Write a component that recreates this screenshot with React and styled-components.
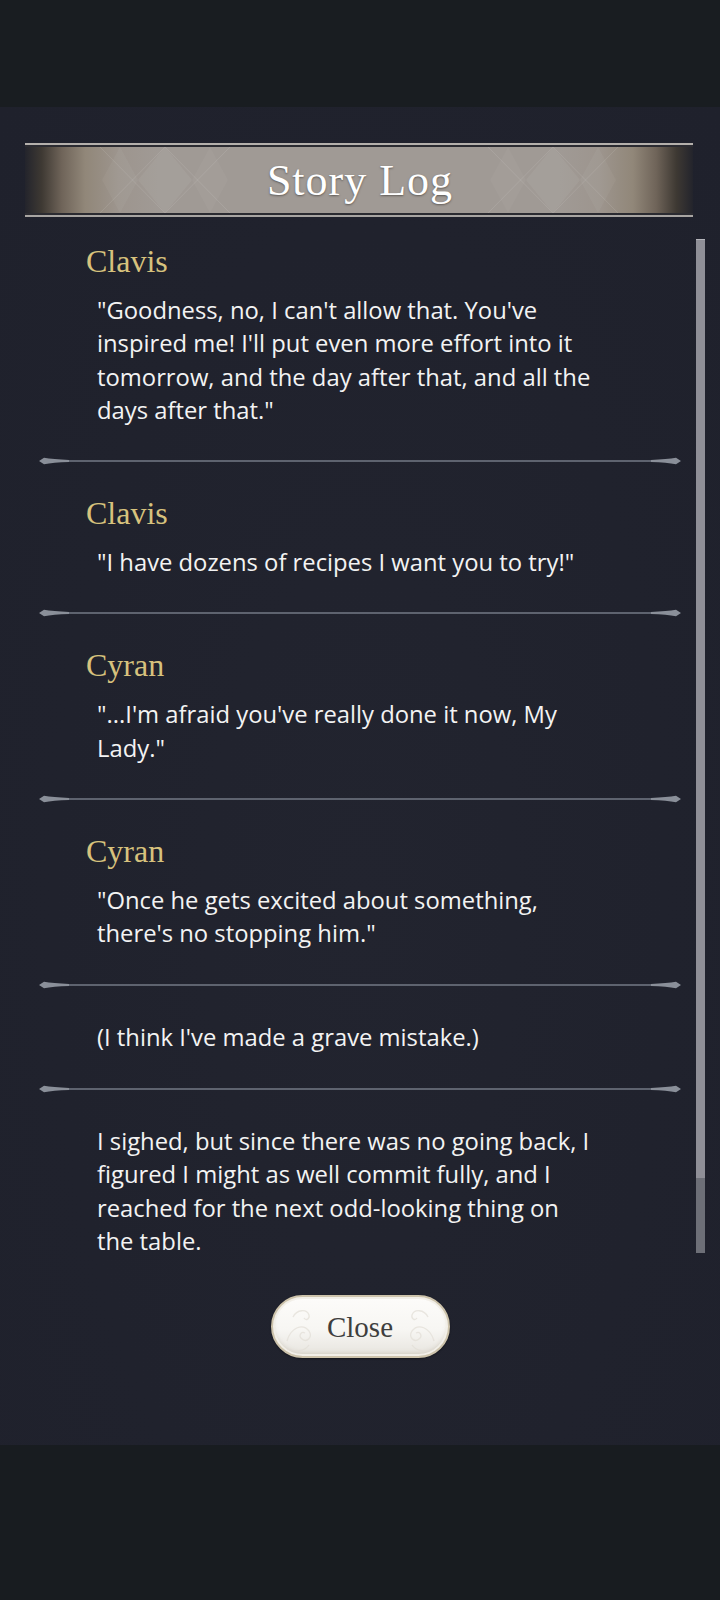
import React from "react"
import styled, { createGlobalStyle } from "styled-components"

const GlobalStyle = createGlobalStyle`
  html, body {
    margin: 0;
    padding: 0;
    background: #181c20;
  }
`

const entries = [
  {
    name: "Clavis",
    lines: [
      "\"Goodness, no, I can't allow that. You've",
      "inspired me! I'll put even more effort into it",
      "tomorrow, and the day after that, and all the",
      "days after that.\"",
    ],
  },
  { name: "Clavis", lines: ["\"I have dozens of recipes I want you to try!\""] },
  { name: "Cyran", lines: ["\"...I'm afraid you've really done it now, My", "Lady.\""] },
  { name: "Cyran", lines: ["\"Once he gets excited about something,", "there's no stopping him.\""] },
  { lines: ["(I think I've made a grave mistake.)"] },
  {
    lines: [
      "I sighed, but since there was no going back, I",
      "figured I might as well commit fully, and I",
      "reached for the next odd-looking thing on",
      "the table.",
    ],
  },
]

const Page = styled.div`
  width: 720px;
  height: 1600px;
  display: flex;
  flex-direction: column;
  background: #181c20;
  overflow: hidden;
`

const TopBar = styled.div`
  height: 107px;
  flex: none;
  background: #191d21;
`

const BottomBar = styled.div`
  flex: 1;
  background: #181c20;
`

const Panel = styled.div`
  height: 1338px;
  flex: none;
  display: flex;
  flex-direction: column;
  padding-top: 36px;
  box-sizing: border-box;
  background: radial-gradient(ellipse at 50% 60%, #22242f 0%, #20222d 60%, #1f212c 100%);
`

const Banner = styled.div`
  position: relative;
  height: 74px;
  margin: 0 27px 0 25px;
  box-sizing: border-box;
  border-top: 2px solid #b4b0ac;
  border-bottom: 2px solid #a8a5a2;
  display: flex;
  align-items: center;
  justify-content: center;
  background: linear-gradient(
    to right,
    #23242c 0%,
    #3e3933 2.5%,
    #6f6459 5.5%,
    #918779 9%,
    #9d958e 14%,
    #a09a95 20%,
    #a09a95 80%,
    #9d958e 86%,
    #918779 91%,
    #6f6459 94.5%,
    #3e3933 97.5%,
    #23242c 100%
  );

  &::before,
  &::after {
    content: "";
    position: absolute;
    left: 0;
    right: 0;
    height: 2px;
    background: #2b2b31;
  }
  &::before { top: 0; }
  &::after { bottom: 0; }
`

const BannerPattern = styled.svg`
  position: absolute;
  inset: 2px 0;
  width: 100%;
  height: 66px;
`

const BannerTitle = styled.h1`
  position: relative;
  margin: 0 0 0 2px;
  font-family: "Liberation Serif", "DejaVu Serif", serif;
  font-weight: 400;
  font-size: 44px;
  letter-spacing: 1px;
  color: #ffffff;
  text-shadow: 0 1px 2px rgba(40, 36, 32, 0.55);
`

const Body = styled.div`
  height: 1045px;
  flex: none;
  display: flex;
  padding-left: 39px;
`

const LogList = styled.div`
  width: 642px;
  flex: none;
  overflow: hidden;
`

const ScrollContent = styled.div`
  margin-top: -3px;
`

const Entry = styled.div`
  padding: ${p => (p.$bare ? "31px 0 30px" : "29px 0 29px")};
`

const Speaker = styled.div`
  padding-left: 47px;
  margin-bottom: 15px;
  font-family: "Liberation Serif", "DejaVu Serif", serif;
  font-size: 32px;
  line-height: 36px;
  color: #d7c27d;
`

const Line = styled.div`
  padding-left: 58px;
  font-family: "Open Sans", "Noto Sans", sans-serif;
  font-size: 23.8px;
  line-height: 33.3px;
  color: #f3f3f3;
  white-space: nowrap;
`

const DividerSvg = styled.svg`
  display: block;
  width: 642px;
  height: 10px;
`

const Scrollbar = styled.div`
  width: 9px;
  height: 1014px;
  margin: 22px 0 0 15px;
  flex: none;
  display: flex;
  flex-direction: column;
  background: #6d6f77;
  border-top: 1px solid #b4b4ba;
  box-sizing: border-box;
`

const Thumb = styled.div`
  height: 938px;
  background: #8f8f97;
`

const Footer = styled.div`
  display: flex;
  justify-content: center;
  padding-top: 33px;
`

const CloseButton = styled.button`
  position: relative;
  width: 179px;
  height: 63px;
  border-radius: 32px;
  border: 2px solid #cdc3ab;
  background: linear-gradient(to bottom, #fdfcfa 0%, #f7f6f3 55%, #e7e4de 100%);
  box-shadow: inset 0 0 0 2px #f2efe8, inset 0 -3px 4px rgba(170, 160, 140, 0.35), 0 1px 2px rgba(0, 0, 0, 0.4);
  display: flex;
  align-items: center;
  justify-content: center;
  padding: 0;
  font-family: "Liberation Serif", "DejaVu Serif", serif;
  font-size: 29px;
  color: #3e3e3e;
  cursor: pointer;
`

const Swirls = styled.svg`
  position: absolute;
  inset: 0;
  width: 100%;
  height: 100%;
`

const ButtonLabel = styled.span`
  position: relative;
  margin-top: 2px;
`

const Divider = () => (
  <DividerSvg viewBox="0 0 642 10">
    <rect x="20" y="4" width="602" height="2" fill="#5e636f" />
    <path d="M0 5 L5 1.8 Q14 3.4 30 4 L30 6 Q14 6.6 5 8.2 Z" fill="#8a8f99" />
    <path d="M642 5 L637 1.8 Q628 3.4 612 4 L612 6 Q628 6.6 637 8.2 Z" fill="#8a8f99" />
  </DividerSvg>
)

const Swirl = ({ x, flip }) => (
  <g transform={`translate(${x} 0) scale(${flip ? -1 : 1} 1)`} fill="none" stroke="#e2ded6" strokeWidth="1.3" opacity="0.7">
    <path d="M0 44 C4 30 16 26 22 34 C26 40 20 46 15 42 C11 39 14 34 18 36" />
    <path d="M6 20 C10 12 20 12 22 18 C23 22 19 24 17 21" />
    <path d="M0 52 C8 56 18 54 22 48" />
  </g>
)

export default function App() {
  return (
    <>
      <GlobalStyle />
      <Page>
        <TopBar />
        <Panel>
          <Banner>
            <BannerPattern viewBox="0 0 668 66" preserveAspectRatio="none">
              <g fill="#ffffff">
                <polygon points="95,0 113,33 95,66 77,33" opacity="0.04" />
                <polygon points="113,33 140,0 167,33 140,66" opacity="0.05" />
                <polygon points="167,33 185,0 203,33 185,66" opacity="0.03" />
                <polygon points="573,0 555,33 573,66 591,33" opacity="0.04" />
                <polygon points="555,33 528,0 501,33 528,66" opacity="0.05" />
                <polygon points="501,33 483,0 465,33 483,66" opacity="0.03" />
              </g>
              <g stroke="#ffffff" strokeWidth="1" opacity="0.1" fill="none">
                <path d="M75 0 L140 66 M140 0 L75 66 M140 0 L205 66 M205 0 L140 66" />
                <path d="M593 0 L528 66 M528 0 L593 66 M528 0 L463 66 M463 0 L528 66" />
              </g>
            </BannerPattern>
            <BannerTitle>Story Log</BannerTitle>
          </Banner>
          <Body>
            <LogList>
              <ScrollContent>
                {entries.map((entry, i) => (
                  <React.Fragment key={i}>
                    <Entry $bare={!entry.name}>
                      {entry.name && <Speaker>{entry.name}</Speaker>}
                      {entry.lines.map(line => (
                        <Line key={line}>{line}</Line>
                      ))}
                    </Entry>
                    {i < entries.length - 1 && <Divider />}
                  </React.Fragment>
                ))}
              </ScrollContent>
            </LogList>
            <Scrollbar>
              <Thumb />
            </Scrollbar>
          </Body>
          <Footer>
            <CloseButton>
              <Swirls viewBox="0 0 175 59">
                <Swirl x={14} />
                <Swirl x={161} flip />
              </Swirls>
              <ButtonLabel>Close</ButtonLabel>
            </CloseButton>
          </Footer>
        </Panel>
        <BottomBar />
      </Page>
    </>
  )
}
